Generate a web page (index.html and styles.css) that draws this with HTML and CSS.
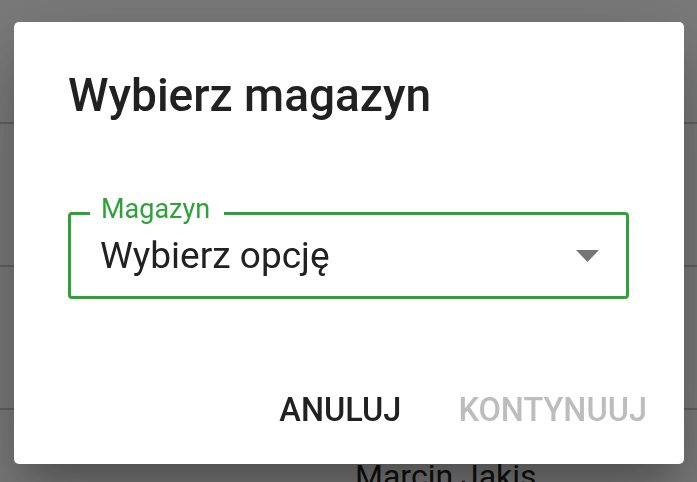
FILE: index.html
```html
<!DOCTYPE html>
<html lang="pl">
<head>
<meta charset="utf-8">
<title>Wybierz magazyn</title>
<link rel="stylesheet" href="styles.css">
</head>
<body>
<div class="page">
  <div class="row row-head"></div>
  <div class="row"></div>
  <div class="row"></div>
  <div class="row row-last"><span class="person">Marcin Jakis</span></div>
</div>
<div class="overlay">
  <div class="dialog" role="dialog" aria-labelledby="dlg-title">
    <h2 class="dialog-title" id="dlg-title">Wybierz magazyn</h2>
    <div class="field">
      <span class="field-label">Magazyn</span>
      <span class="field-value">Wybierz opcję</span>
      <svg class="field-arrow" width="23" height="12" viewBox="0 0 23 12" aria-hidden="true"><path d="M0 0 H23 L11.5 12 Z" fill="#757575"/></svg>
    </div>
    <div class="actions">
      <button class="btn">ANULUJ</button>
      <button class="btn btn-disabled" disabled>KONTYNUUJ</button>
    </div>
  </div>
</div>
</body>
</html>
```
FILE: styles.css
```css
html, body {
  margin: 0;
  padding: 0;
  height: 100%;
}
body {
  background: #ffffff;
  font-family: Roboto, "Liberation Sans", Arial, sans-serif;
  overflow: hidden;
}
.page {
  display: flex;
  flex-direction: column;
}
.row {
  height: 141px;
  border-bottom: 2px solid #cccccc;
}
.row-head {
  height: 122px;
}
.row-last {
  border-bottom: none;
  padding: 50px 0 0 355px;
  height: auto;
}
.person {
  font-size: 32px;
  line-height: 32px;
  color: #222222;
}
.overlay {
  position: fixed;
  inset: 0;
  background: rgba(0, 0, 0, 0.52);
  display: flex;
  align-items: flex-start;
  justify-content: flex-start;
  padding: 22px 0 0 14px;
}
.dialog {
  width: 670px;
  height: 442px;
  box-sizing: border-box;
  background: #ffffff;
  border-radius: 5px;
  box-shadow: 0 22px 30px -14px rgba(0,0,0,0.2), 0 48px 76px 6px rgba(0,0,0,0.14), 0 18px 92px 16px rgba(0,0,0,0.12);
  padding: 50px 55px 38px 54px;
  display: flex;
  flex-direction: column;
}
.dialog-title {
  margin: 0;
  font-size: 46px;
  line-height: 46px;
  font-weight: 500;
  color: #212121;
}
.field {
  position: relative;
  margin-top: 94px;
  border: 3px solid #2ea13b;
  border-radius: 4px;
  padding: 22px 27px 22px 29px;
  display: flex;
  align-items: center;
}
.field-label {
  position: absolute;
  top: -19px;
  left: 19px;
  padding: 0 14px 0 11px;
  background: #ffffff;
  color: #2ea13b;
  font-size: 27px;
  line-height: 26px;
}
.field-value {
  flex: 1;
  font-size: 37px;
  line-height: 37px;
  color: #212121;
}
.field-arrow {
  display: block;
  margin-top: 1px;
}
.actions {
  margin-top: 95px;
  margin-right: -18px;
  display: flex;
  justify-content: flex-end;
  gap: 57px;
}
.btn {
  border: none;
  background: none;
  padding: 0;
  margin: 0;
  font-family: Roboto, "Liberation Sans", Arial, sans-serif;
  font-size: 32.5px;
  line-height: 32px;
  font-weight: 500;
  color: #212121;
  cursor: pointer;
}
.btn-disabled {
  color: #bdbdbd;
  cursor: default;
}
```
